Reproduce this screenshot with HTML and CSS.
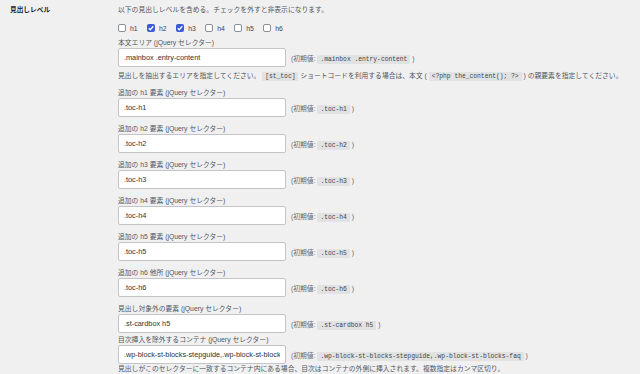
FILE: index.html
```html
<!DOCTYPE html>
<html lang="ja">
<head>
<meta charset="UTF-8">
<meta name="viewport" content="width=device-width, initial-scale=1.0">
<title>目次設定</title>
<link rel="stylesheet" href="styles.css">
</head>
<body>
    <div class="setting">
        <div class="setting-title">見出しレベル</div>

        <div class="setting-body">
            <p class="desc">以下の見出しレベルを含める。チェックを外すと非表示になります。</p>

            <div class="checks">
                <label class="check"><span class="box"></span>h1</label>
                <label class="check"><span class="box checked"><svg viewBox="0 0 8 8"><path d="M1.8 4.2 L3.3 5.7 L6.3 2.3" fill="none" stroke="#fff" stroke-width="1.3"/></svg></span>h2</label>
                <label class="check"><span class="box checked"><svg viewBox="0 0 8 8"><path d="M1.8 4.2 L3.3 5.7 L6.3 2.3" fill="none" stroke="#fff" stroke-width="1.3"/></svg></span>h3</label>
                <label class="check"><span class="box"></span>h4</label>
                <label class="check"><span class="box"></span>h5</label>
                <label class="check"><span class="box"></span>h6</label>
            </div>

            <div class="field field-first">
                <label class="field-label">本文エリア (jQuery セレクター)</label>
                <div class="field-row">
                    <input class="text" type="text" value=".mainbox .entry-content">
                    <span class="default">(初期値: <code>.mainbox .entry-content</code> )</span>
                </div>
                <p class="help">見出しを抽出するエリアを指定してください。 <code>[st_toc]</code> ショートコードを利用する場合は、本文 ( <code>&lt;?php the_content(); ?&gt;</code> ) の親要素を指定してください。</p>
            </div>

            <div class="field">
                <label class="field-label">追加の h1 要素 (jQuery セレクター)</label>
                <div class="field-row">
                    <input class="text" type="text" value=".toc-h1">
                    <span class="default">(初期値: <code>.toc-h1</code> )</span>
                </div>
            </div>

            <div class="field">
                <label class="field-label">追加の h2 要素 (jQuery セレクター)</label>
                <div class="field-row">
                    <input class="text" type="text" value=".toc-h2">
                    <span class="default">(初期値: <code>.toc-h2</code> )</span>
                </div>
            </div>

            <div class="field">
                <label class="field-label">追加の h3 要素 (jQuery セレクター)</label>
                <div class="field-row">
                    <input class="text" type="text" value=".toc-h3">
                    <span class="default">(初期値: <code>.toc-h3</code> )</span>
                </div>
            </div>

            <div class="field">
                <label class="field-label">追加の h4 要素 (jQuery セレクター)</label>
                <div class="field-row">
                    <input class="text" type="text" value=".toc-h4">
                    <span class="default">(初期値: <code>.toc-h4</code> )</span>
                </div>
            </div>

            <div class="field">
                <label class="field-label">追加の h5 要素 (jQuery セレクター)</label>
                <div class="field-row">
                    <input class="text" type="text" value=".toc-h5">
                    <span class="default">(初期値: <code>.toc-h5</code> )</span>
                </div>
            </div>

            <div class="field">
                <label class="field-label">追加の h6 他所 (jQuery セレクター)</label>
                <div class="field-row">
                    <input class="text" type="text" value=".toc-h6">
                    <span class="default">(初期値: <code>.toc-h6</code> )</span>
                </div>
            </div>

            <div class="field field-tight">
                <label class="field-label">見出し対象外の要素 (jQuery セレクター)</label>
                <div class="field-row">
                    <input class="text" type="text" value=".st-cardbox h5">
                    <span class="default">(初期値: <code>.st-cardbox h5</code> )</span>
                </div>
            </div>

            <div class="field field-last">
                <label class="field-label">目次挿入を除外するコンテナ (jQuery セレクター)</label>
                <div class="field-row">
                    <input class="text" type="text" value=".wp-block-st-blocks-stepguide,.wp-block-st-blocks-faq">
                    <span class="default">(初期値: <code>.wp-block-st-blocks-stepguide,.wp-block-st-blocks-faq</code> )</span>
                </div>
                <p class="help help-last">見出しがこのセレクターに一致するコンテナ内にある場合、目次はコンテナの外側に挿入されます。複数指定はカンマ区切り。</p>
            </div>
        </div>
    </div>
</body>
</html>
```

FILE: styles.css
```css
body {
    margin: 0;
    background: #f0f0f1;
    font-family: "Liberation Sans", "Noto Sans CJK JP", sans-serif;
    font-size: 6.8px;
    color: #3c434a;
    overflow: hidden;
}
.setting {
    display: flex;
}
.setting-title {
    width: 108px;
    padding: 5px 0 0 10px;
    font-weight: bold;
    font-size: 6.7px;
    line-height: 10px;
    color: #1d2327;
}
.setting-body {
    flex: 1;
    padding-top: 5px;
}
.desc {
    margin: 0;
    line-height: 10px;
    color: #50575e;
}
.checks {
    display: flex;
    gap: 9.5px;
    margin-top: 9px;
    height: 8px;
    align-items: center;
}
.check {
    display: flex;
    align-items: center;
    gap: 4px;
    color: #3c434a;
}
.box {
    width: 8px;
    height: 8px;
    box-sizing: border-box;
    border: 1px solid #8c8f94;
    border-radius: 2px;
    background: #fff;
    display: block;
}
.box.checked {
    border: none;
    background: #3a5ad9;
}
.box svg {
    display: block;
    width: 8px;
    height: 8px;
}
.field {
    margin-bottom: 7px;
}
.field-first {
    margin-top: 6px;
    margin-bottom: 6px;
}
.field-tight {
    margin-bottom: 2px;
}
.field-label {
    display: block;
    line-height: 10px;
    color: #50575e;
}
.field-row {
    display: flex;
    align-items: center;
    gap: 5px;
}
.text {
    width: 168px;
    height: 19px;
    box-sizing: border-box;
    margin: 0;
    padding: 0 5px;
    border: 1px solid #c3c4c7;
    border-radius: 2px;
    background: #fff;
    font-family: "Liberation Sans", "Noto Sans CJK JP", sans-serif;
    font-size: 7.3px;
    color: #2c3338;
    outline: none;
}
.default {
    color: #646970;
}
code {
    font-family: "Liberation Mono", "DejaVu Sans Mono", monospace;
    font-size: 6.3px;
    background: #e2e2e3;
    padding: 1px 3px;
    border-radius: 1px;
    color: #3c434a;
}
.help {
    margin: 4px 0 0;
    line-height: 10px;
    color: #50575e;
}
.help-last {
    margin-top: 0;
}
```
